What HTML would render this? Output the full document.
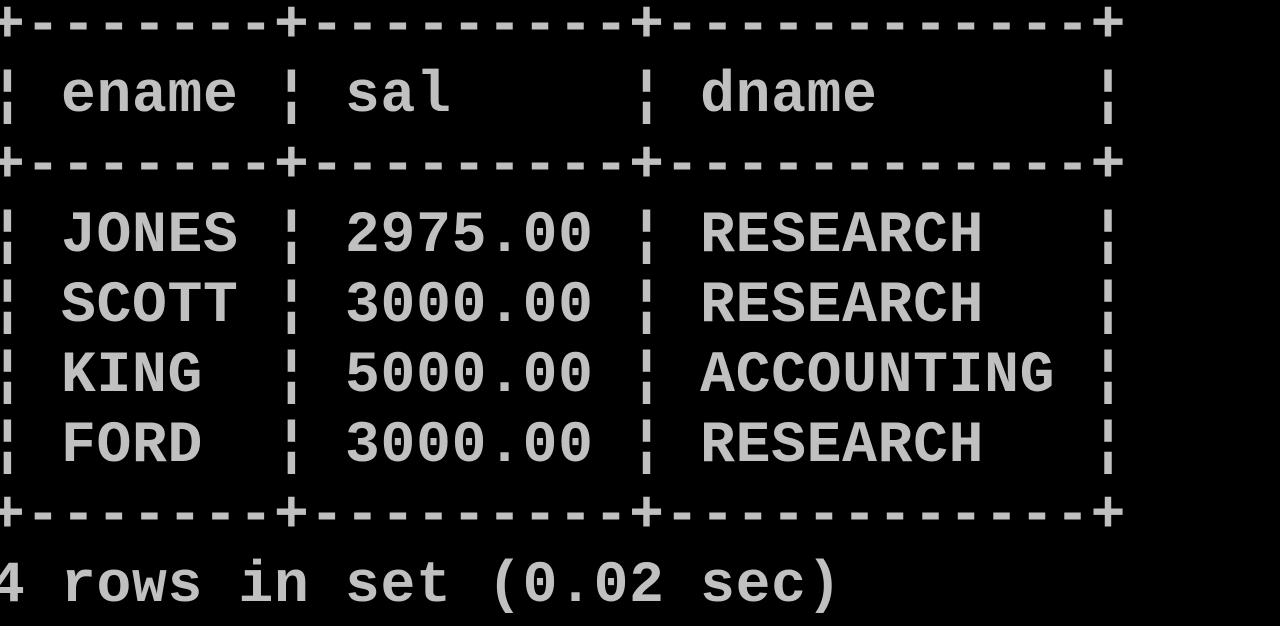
<!DOCTYPE html>
<html><head><meta charset="utf-8"><style>
html,body{margin:0;padding:0;background:#000;width:1280px;height:626px;overflow:hidden}
pre{position:absolute;left:-10px;top:-8px;margin:0;color:#c0c0c0;font-family:"Liberation Mono",monospace;font-weight:bold;font-size:58px;letter-spacing:0.7px;line-height:70px}
</style></head><body>
<pre>+-------+---------+------------+
¦ ename ¦ sal     ¦ dname      ¦
+-------+---------+------------+
¦ JONES ¦ 2975.00 ¦ RESEARCH   ¦
¦ SCOTT ¦ 3000.00 ¦ RESEARCH   ¦
¦ KING  ¦ 5000.00 ¦ ACCOUNTING ¦
¦ FORD  ¦ 3000.00 ¦ RESEARCH   ¦
+-------+---------+------------+
4 rows in set (0.02 sec)</pre>
</body></html>
